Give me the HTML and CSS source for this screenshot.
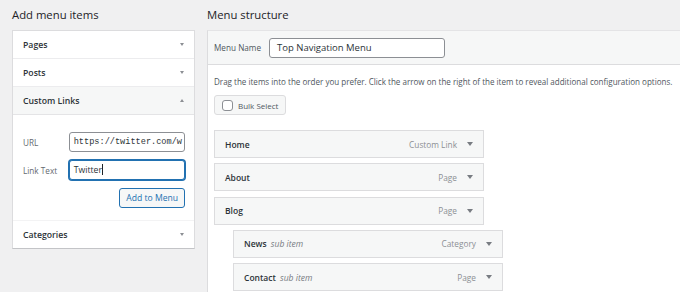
FILE: index.html
```html
<!DOCTYPE html>
<html lang="en">
<head>
  <meta charset="UTF-8">
  <title>Menus</title>
  <link rel="stylesheet" href="styles.css">
</head>
<body>
  <div class="wrap">
    <div class="col-left">
      <h2>Add menu items</h2>
      <div class="accordion">
        <div class="acc-row"><span>Pages</span><span class="arrow"></span></div>
        <div class="acc-row"><span>Posts</span><span class="arrow"></span></div>
        <div class="acc-row open"><span>Custom Links</span><span class="arrow up"></span></div>
        <div class="acc-body">
          <div class="field">
            <label>URL</label>
            <div class="input code">https://twitter.com/w</div>
          </div>
          <div class="field">
            <label>Link Text</label>
            <div class="input focus">Twitter<span class="caret"></span></div>
          </div>
          <div class="btn-row">
            <button class="btn">Add to Menu</button>
          </div>
        </div>
        <div class="acc-row last"><span>Categories</span><span class="arrow"></span></div>
      </div>
    </div>

    <div class="col-right">
      <h2>Menu structure</h2>
      <div class="menu-panel">
        <div class="menu-header">
          <label>Menu Name</label>
          <div class="input name">Top Navigation Menu</div>
        </div>
        <div class="menu-body">
          <p class="hint">Drag the items into the order you prefer. Click the arrow on the right of the item to reveal additional configuration options.</p>
          <button class="bulk"><span class="cb"></span>Bulk Select</button>
          <ul class="items">
            <li class="item"><span class="title">Home</span><span class="type">Custom Link</span><span class="arrow dark"></span></li>
            <li class="item"><span class="title">About</span><span class="type">Page</span><span class="arrow dark"></span></li>
            <li class="item"><span class="title">Blog</span><span class="type">Page</span><span class="arrow dark"></span></li>
            <li class="item sub"><span class="title">News <em>sub item</em></span><span class="type">Category</span><span class="arrow dark"></span></li>
            <li class="item sub"><span class="title">Contact <em>sub item</em></span><span class="type">Page</span><span class="arrow dark"></span></li>
          </ul>
        </div>
      </div>
    </div>
  </div>
</body>
</html>
```

FILE: styles.css
```css
body {
  margin: 0;
  background: #f0f0f1;
  font-family: "Open Sans", "Noto Sans", sans-serif;
  color: #1d2327;
  overflow: hidden;
}
.wrap {
  display: flex;
  gap: 12px;
  padding-left: 12px;
}
h2 {
  margin: 0;
  height: 30px;
  line-height: 30px;
  font-size: 11.3px;
  font-weight: 400;
  color: #1d2327;
}
.col-left {
  width: 183px;
  flex: none;
}
.col-right {
  flex: 1;
}
.accordion {
  background: #fff;
  border: 1px solid #dcdcde;
  border-bottom-color: #c3c4c7;
}
.acc-row {
  display: flex;
  justify-content: space-between;
  align-items: center;
  height: 27px;
  padding: 0 10px;
  border-bottom: 1px solid #ececee;
  font-size: 8.7px;
  font-weight: 600;
  color: #2c3338;
}
.acc-row.open {
  background: #f6f7f7;
  border-bottom-color: #e4e4e6;
}
.acc-row.last {
  border-bottom: none;
  border-top: 1px solid #f3f3f4;
  height: 27px;
}
.arrow {
  width: 0;
  height: 0;
  border-left: 2.5px solid transparent;
  border-right: 2.5px solid transparent;
  border-top: 3px solid #8c8f94;
}
.arrow.up {
  border-top: none;
  border-bottom: 3px solid #8c8f94;
}
.arrow.dark {
  border-left-width: 3.5px;
  border-right-width: 3.5px;
  border-top: 4px solid #787c82;
}
.acc-body {
  box-sizing: border-box;
  height: 105px;
  padding: 17px 9px 0 10px;
}
.field {
  display: flex;
  align-items: center;
  margin-bottom: 8px;
}
.field label {
  width: 46px;
  font-size: 8.2px;
  color: #646970;
}
.input {
  box-sizing: border-box;
  width: 117px;
  height: 20px;
  line-height: 18px;
  padding: 0 4px;
  border: 1px solid #8c8f94;
  border-radius: 3px;
  background: #fff;
  font-size: 8.7px;
  white-space: nowrap;
  overflow: hidden;
  color: #2c3338;
}
.input.code {
  font-family: "Liberation Mono", "DejaVu Sans Mono", monospace;
  font-size: 8.6px;
}
.input.focus {
  border-color: #2271b1;
  box-shadow: 0 0 0 1px #2271b1;
}
.caret {
  display: inline-block;
  width: 1px;
  height: 11px;
  background: #1d2327;
  vertical-align: -2px;
}
.btn-row {
  display: flex;
  justify-content: flex-end;
}
.btn {
  height: 20px;
  padding: 0 6px;
  border: 1px solid #2271b1;
  border-radius: 3px;
  background: #f6f7f7;
  color: #2271b1;
  font-family: inherit;
  font-size: 8.6px;
}
.menu-panel {
  background: #fff;
  border-left: 1px solid #dcdcde;
  border-top: 1px solid #e4e4e6;
  height: 262px;
  overflow: hidden;
}
.menu-header {
  display: flex;
  align-items: center;
  gap: 8px;
  height: 33px;
  padding-left: 6px;
  background: #f6f7f7;
  border-bottom: 1px solid #dcdcde;
}
.menu-header label {
  font-size: 8.2px;
  color: #50575e;
}
.input.name {
  width: 176px;
  font-size: 9.5px;
  padding: 0 7px;
}
.menu-body {
  padding: 8px 6px;
}
.hint {
  margin: 0 0 5px;
  font-size: 8.05px;
  line-height: 17px;
  color: #50575e;
  white-space: nowrap;
}
.bulk {
  display: flex;
  align-items: center;
  gap: 5px;
  height: 20px;
  padding: 0 7px;
  background: #f6f7f7;
  border: 1px solid #dcdcde;
  border-radius: 3px;
  font-family: inherit;
  font-size: 8px;
  color: #50575e;
}
.cb {
  width: 11px;
  height: 11px;
  box-sizing: border-box;
  border: 1px solid #8c8f94;
  border-radius: 3px;
  background: #fff;
}
.items {
  list-style: none;
  margin: 15px 0 0;
  padding: 0;
}
.item {
  box-sizing: border-box;
  display: flex;
  align-items: center;
  width: 270px;
  height: 28px;
  margin-bottom: 5.3px;
  padding: 0 10px;
  background: #f6f7f7;
  border: 1px solid #dcdcde;
  font-size: 8.5px;
  font-weight: 600;
  color: #2c3338;
}
.item.sub {
  margin-left: 19px;
}
.item .title {
  flex: 1;
}
.item em {
  font-weight: 400;
  color: #787c82;
  margin-left: 2px;
}
.item .type {
  font-weight: 400;
  color: #8c8f94;
  margin-right: 10px;
  font-size: 8.3px;
}
```
